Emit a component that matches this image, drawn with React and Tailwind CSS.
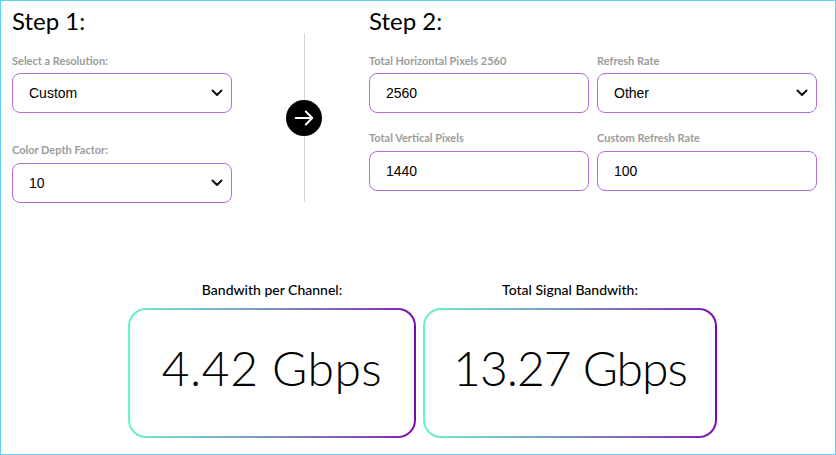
function Chevron() {
  return (
    <svg width="12" height="8" viewBox="0 0 12 8" fill="none" className="shrink-0">
      <path d="M1.5 1.5l4.5 4.5 4.5-4.5" stroke="#111" strokeWidth="2" strokeLinecap="round" strokeLinejoin="round" />
    </svg>
  );
}

function Label({ children, className = "" }) {
  return (
    <div className={`text-[11px] leading-[14px] font-bold text-[#9c9c9c] ${className}`}>
      {children}
    </div>
  );
}

function SelectBox({ value }) {
  return (
    <div className="h-[40px] w-full rounded-[8px] border border-[#b56fd8] flex items-center justify-between pl-[16px] pr-[8px] font-['Liberation_Sans',Arial,sans-serif] text-[14px] text-black">
      <span>{value}</span>
      <Chevron />
    </div>
  );
}

function InputBox({ value }) {
  return (
    <div className="h-[40px] w-full rounded-[8px] border border-[#b56fd8] flex items-center pl-[16px] font-['Liberation_Sans',Arial,sans-serif] text-[14px] text-black">
      {value}
    </div>
  );
}

function ResultBox({ label, value, width, track }) {
  return (
    <div className={`flex flex-col items-center ${width}`}>
      <div className="text-[14px] leading-[20px] font-medium text-black mb-[8px]">{label}</div>
      <div className="w-full h-[130px] rounded-[18px] p-[2px] bg-linear-to-r from-[#66f5c8] via-[#7a8fc2] to-[#7e03b3]">
        <div className={`w-full h-full rounded-[16px] bg-white pt-[29px] text-center text-[48px] leading-[58px] font-light text-black ${track}`}>
          {value}
        </div>
      </div>
    </div>
  );
}

export default function App() {
  return (
    <div className="w-[836px] h-[455px] border border-[#5fcfff] bg-white font-['Lato',sans-serif] overflow-hidden">
      <div className="flex pl-[11px] pt-[4px]">
        {/* STEP 1 */}
        <div className="w-[220px]">
          <h2 className="text-[24px] leading-[32px] text-black">Step 1:</h2>
          <Label className="mt-[17px] mb-[5px]">Select a Resolution:</Label>
          <SelectBox value="Custom" />
          <Label className="mt-[30px] mb-[6px]">Color Depth Factor:</Label>
          <SelectBox value="10" />
        </div>

        {/* DIVIDER */}
        <div className="ml-[54px] mr-[47px] w-[36px] mt-[28px] h-[169px] flex flex-col items-center">
          <div className="flex-1 w-px bg-[#d4d4d4]" />
          <div className="w-[36px] h-[36px] rounded-full bg-black flex items-center justify-center">
            <svg width="22" height="22" viewBox="0 0 24 24" fill="none">
              <path d="M3 12h18M14 5l7 7-7 7" stroke="white" strokeWidth="2.2" strokeLinecap="round" strokeLinejoin="round" />
            </svg>
          </div>
          <div className="flex-1 w-px bg-[#d4d4d4]" />
        </div>

        {/* STEP 2 */}
        <div className="w-[448px]">
          <h2 className="text-[24px] leading-[32px] text-black">Step 2:</h2>
          <div className="grid grid-cols-2 gap-x-[8px] mt-[17px]">
            <div>
              <Label className="mb-[5px]">Total Horizontal Pixels 2560</Label>
              <InputBox value="2560" />
            </div>
            <div>
              <Label className="mb-[5px]">Refresh Rate</Label>
              <SelectBox value="Other" />
            </div>
            <div className="mt-[18px]">
              <Label className="mb-[6px]">Total Vertical Pixels</Label>
              <InputBox value="1440" />
            </div>
            <div className="mt-[18px]">
              <Label className="mb-[6px]">Custom Refresh Rate</Label>
              <InputBox value="100" />
            </div>
          </div>
        </div>
      </div>

      {/* RESULTS */}
      <div className="flex gap-[7px] pl-[127px] mt-[77px]">
        <ResultBox label="Bandwith per Channel:" value="4.42 Gbps" width="w-[288px]" track="tracking-[0.5px]" />
        <ResultBox label="Total Signal Bandwith:" value="13.27 Gbps" width="w-[294px]" track="tracking-[-1px]" />
      </div>
    </div>
  );
}
